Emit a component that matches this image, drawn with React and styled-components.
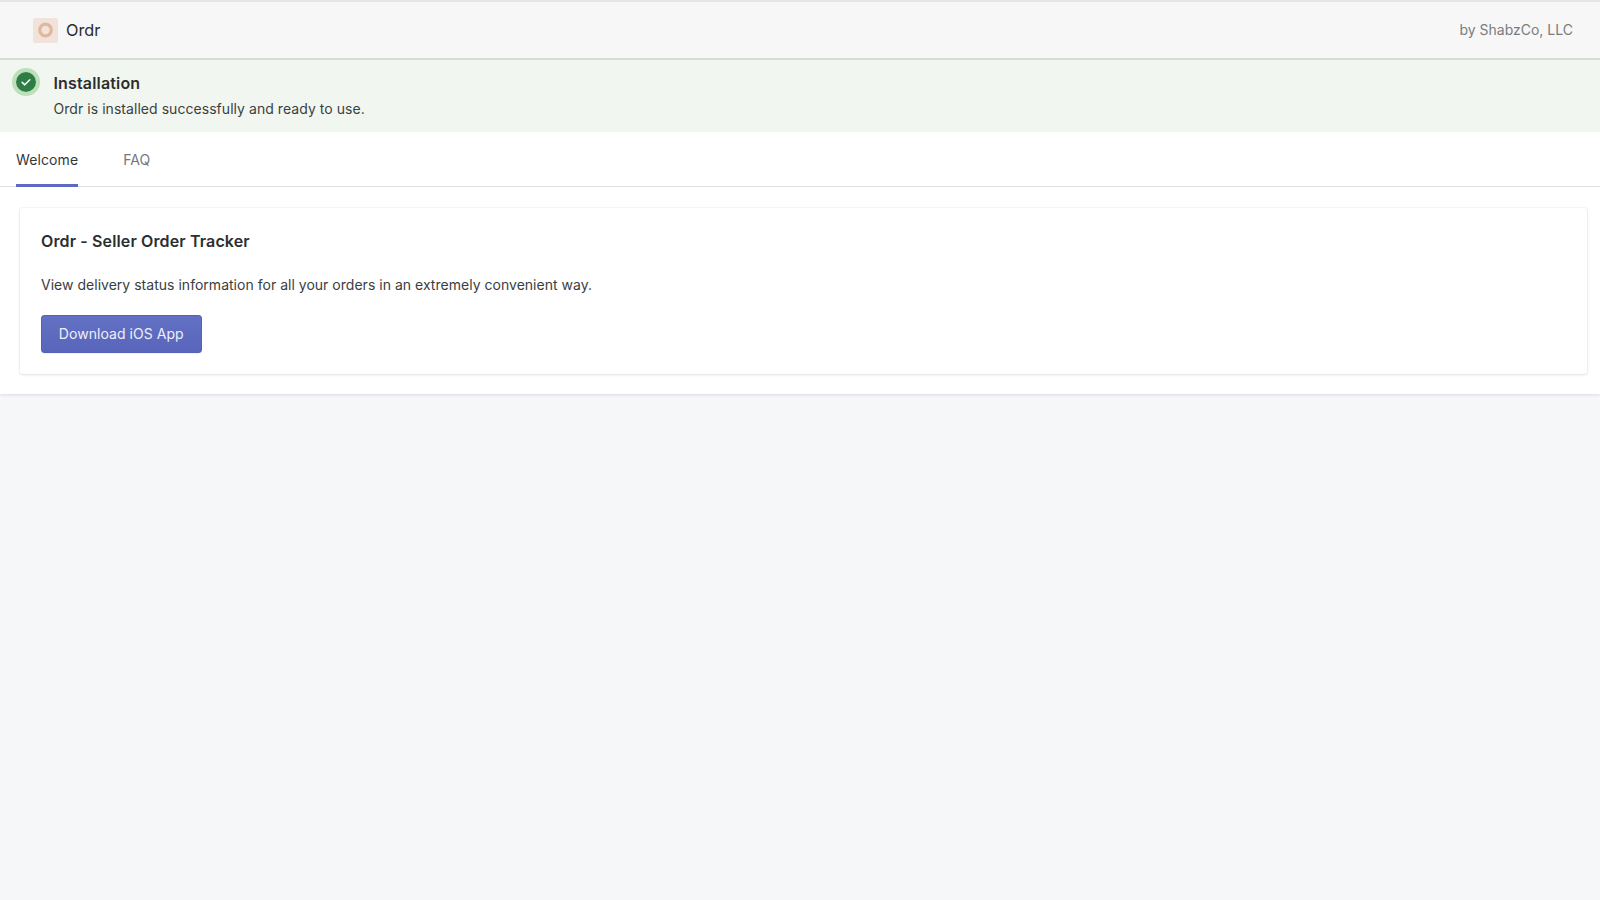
import React from "react";
import styled, { createGlobalStyle } from "styled-components";

const GlobalStyle = createGlobalStyle`
  html, body {
    margin: 0;
    padding: 0;
    height: 100%;
    background: #f6f7f9;
    font-family: Inter, "Noto Sans", "Liberation Sans", sans-serif;
    color: #202223;
  }
`;

function LogoMark() {
  return (
    <Logo>
      <svg width="16" height="16" viewBox="0 0 16 16">
        <circle cx="7.5" cy="8" r="5.8" fill="none" stroke="#e0b89b" strokeWidth="3.2" />
      </svg>
    </Logo>
  );
}

function SuccessIcon() {
  return (
    <StatusIcon>
      <svg width="20" height="20" viewBox="0 0 20 20">
        <circle cx="10" cy="10" r="10" fill="#2f7d46" />
        <path
          d="M6.2 10.3l2.6 2.5L13.8 7.8"
          fill="none"
          stroke="#f2f7f2"
          strokeWidth="1.6"
          strokeLinecap="round"
          strokeLinejoin="round"
        />
      </svg>
    </StatusIcon>
  );
}

export default function App() {
  return (
    <Page>
      <GlobalStyle />
      <TopBar>
        <Brand>
          <LogoMark />
          <AppName>Ordr</AppName>
        </Brand>
        <Vendor>by ShabzCo, LLC</Vendor>
      </TopBar>
      <Panel>
        <Banner>
          <SuccessIcon />
          <div>
            <BannerTitle>Installation</BannerTitle>
            <BannerText>Ordr is installed successfully and ready to use.</BannerText>
          </div>
        </Banner>
        <Tabs>
          <Tab $active>Welcome</Tab>
          <Tab>FAQ</Tab>
        </Tabs>
        <Content>
          <Card>
            <CardTitle>Ordr - Seller Order Tracker</CardTitle>
            <CardText>
              View delivery status information for all your orders in an extremely convenient way.
            </CardText>
            <PrimaryButton>Download iOS App</PrimaryButton>
          </Card>
        </Content>
      </Panel>
    </Page>
  );
}

const Page = styled.div`
  min-height: 100vh;
  background: #f6f7f9;
  -webkit-font-smoothing: antialiased;
`;

const TopBar = styled.header`
  display: flex;
  align-items: center;
  justify-content: space-between;
  box-sizing: border-box;
  height: 60px;
  padding: 0 27px 0 33px;
  background: #f7f7f7;
  border-top: 2px solid #e6e6e6;
  border-bottom: 2px solid #dcdedd;
`;

const Brand = styled.div`
  display: flex;
  align-items: center;
  gap: 8px;
`;

const Logo = styled.div`
  display: flex;
  align-items: center;
  justify-content: center;
  width: 25px;
  height: 25px;
  border-radius: 2px;
  background: #f1e3dc;
`;

const AppName = styled.span`
  font-size: 16.3px;
  line-height: 24px;
  color: #2a2c2d;
`;

const Vendor = styled.span`
  font-size: 14px;
  line-height: 20px;
  color: #7a7c7e;
`;

const Panel = styled.main`
  background: #fff;
  box-shadow: 0 1px 3px rgba(63, 63, 68, 0.15);
`;

const Banner = styled.section`
  display: flex;
  align-items: flex-start;
  gap: 17.5px;
  box-sizing: border-box;
  height: 72px;
  padding: 11px 16px 0;
  background: #f1f7f0;
`;

const StatusIcon = styled.span`
  display: flex;
  flex: none;
  width: 20px;
  height: 20px;
  margin-top: 1px;
  border-radius: 50%;
  box-shadow: 0 0 0 4px #bde0b9;
`;

const BannerTitle = styled.h2`
  margin: 0;
  font-size: 16px;
  line-height: 24px;
  font-weight: 600;
  letter-spacing: 0.16px;
  color: #2b2e30;
`;

const BannerText = styled.p`
  margin: 4px 0 0;
  font-size: 14px;
  line-height: 20px;
  letter-spacing: 0.05px;
  color: #3b3e41;
`;

const Tabs = styled.nav`
  display: flex;
  gap: 45px;
  box-sizing: border-box;
  height: 55px;
  padding: 0 16px;
  border-bottom: 1px solid #dfe3e8;
`;

const Tab = styled.div`
  display: flex;
  align-items: center;
  margin-bottom: -1px;
  padding-top: 3px;
  font-size: 14px;
  letter-spacing: 0.1px;
  color: ${(p) => (p.$active ? "#35383a" : "#74787c")};
  border-bottom: 3px solid ${(p) => (p.$active ? "#5c6ac4" : "transparent")};
`;

const Content = styled.div`
  padding: 21px 13.5px 20px 20px;
`;

const Card = styled.section`
  box-sizing: border-box;
  height: 166px;
  padding: 21px 21px 0;
  background: #fff;
  border-radius: 3px;
  box-shadow: 0 0 0 1px rgba(63, 63, 68, 0.04), 0 1px 3px rgba(63, 63, 68, 0.12);
`;

const CardTitle = styled.h3`
  margin: 0;
  font-size: 16px;
  line-height: 24px;
  font-weight: 600;
  letter-spacing: 0.13px;
  color: #2b2e30;
`;

const CardText = styled.p`
  margin: 22px 0 0;
  font-size: 14px;
  line-height: 20px;
  letter-spacing: 0.02px;
  color: #3b3e41;
`;

const PrimaryButton = styled.button`
  display: block;
  box-sizing: border-box;
  width: 160.5px;
  height: 38px;
  margin-top: 20px;
  padding: 0 0 1px;
  font: inherit;
  font-size: 14px;
  letter-spacing: 0.05px;
  color: #eef0f9;
  background: linear-gradient(180deg, #6371c4, #5865bb);
  border: 1px solid #5462b9;
  border-radius: 3px;
  box-shadow: 0 1px 0 rgba(22, 29, 37, 0.05);
`;
